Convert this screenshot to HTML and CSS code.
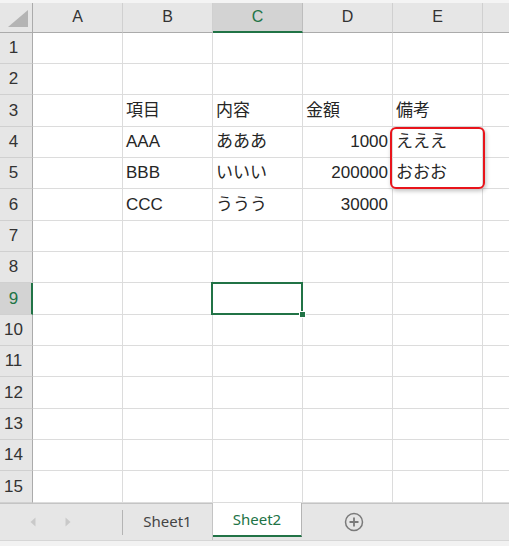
FILE: index.html
```html
<!DOCTYPE html>
<html lang="ja">
<head>
<meta charset="utf-8">
<title>Sheet2</title>
<link rel="stylesheet" href="styles.css">
</head>
<body>
<div class="app">
  <div class="topstrip"></div>
  <div class="sheet">
    <div class="corner"><span class="tri"></span></div>
    <div class="ch">A</div><div class="ch">B</div><div class="ch sel">C</div><div class="ch">D</div><div class="ch">E</div><div class="ch last"></div>

    <div class="rh r1">1</div><div class="c"></div><div class="c"></div><div class="c"></div><div class="c"></div><div class="c"></div><div class="c last"></div>
    <div class="rh r1">2</div><div class="c"></div><div class="c"></div><div class="c"></div><div class="c"></div><div class="c"></div><div class="c last"></div>
    <div class="rh r2">3</div><div class="c"></div><div class="c">項目</div><div class="c">内容</div><div class="c">金額</div><div class="c">備考</div><div class="c last"></div>
    <div class="rh r1">4</div><div class="c"></div><div class="c">AAA</div><div class="c">あああ</div><div class="c num">1000</div><div class="c">えええ</div><div class="c last"></div>
    <div class="rh r1">5</div><div class="c"></div><div class="c">BBB</div><div class="c">いいい</div><div class="c num">200000</div><div class="c">おおお</div><div class="c last"></div>
    <div class="rh r2">6</div><div class="c"></div><div class="c">CCC</div><div class="c">ううう</div><div class="c num">30000</div><div class="c"></div><div class="c last"></div>
    <div class="rh r1">7</div><div class="c"></div><div class="c"></div><div class="c"></div><div class="c"></div><div class="c"></div><div class="c last"></div>
    <div class="rh r1">8</div><div class="c"></div><div class="c"></div><div class="c"></div><div class="c"></div><div class="c"></div><div class="c last"></div>
    <div class="rh r2 sel">9</div><div class="c"></div><div class="c"></div><div class="c active"><span class="handle"></span></div><div class="c"></div><div class="c"></div><div class="c last"></div>
    <div class="rh r1">10</div><div class="c"></div><div class="c"></div><div class="c"></div><div class="c"></div><div class="c"></div><div class="c last"></div>
    <div class="rh r1">11</div><div class="c"></div><div class="c"></div><div class="c"></div><div class="c"></div><div class="c"></div><div class="c last"></div>
    <div class="rh r2">12</div><div class="c"></div><div class="c"></div><div class="c"></div><div class="c"></div><div class="c"></div><div class="c last"></div>
    <div class="rh r1">13</div><div class="c"></div><div class="c"></div><div class="c"></div><div class="c"></div><div class="c"></div><div class="c last"></div>
    <div class="rh r1">14</div><div class="c"></div><div class="c"></div><div class="c"></div><div class="c"></div><div class="c"></div><div class="c last"></div>
    <div class="rh r2">15</div><div class="c"></div><div class="c"></div><div class="c"></div><div class="c"></div><div class="c"></div><div class="c last"></div>

    <div class="highlight"></div>
  </div>
  <div class="tabbar">
    <div class="nav">
      <svg class="arrow" width="6" height="10" viewBox="0 0 6 10"><path d="M5.5 0.5 L0.5 5 L5.5 9.5 Z" fill="#c9c9c9"/></svg>
      <svg class="arrow" width="6" height="10" viewBox="0 0 6 10"><path d="M0.5 0.5 L5.5 5 L0.5 9.5 Z" fill="#c9c9c9"/></svg>
    </div>
    <div class="sep"></div>
    <div class="tab">Sheet1</div>
    <div class="tab active">Sheet2</div>
    <div class="rest">
      <svg class="plus" width="20" height="20" viewBox="0 0 20 20">
        <circle cx="10" cy="10" r="8.5" fill="none" stroke="#7a7a7a" stroke-width="1.5"/>
        <path d="M10 5.5 V14.5 M5.5 10 H14.5" stroke="#7a7a7a" stroke-width="1.8"/>
      </svg>
    </div>
  </div>
  <div class="status"></div>
</div>
</body>
</html>
```

FILE: styles.css
```css
html, body {
  margin: 0;
  padding: 0;
  background: #ffffff;
}

.app {
  width: 509px;
  height: 546px;
  overflow: hidden;
  font-family: "Liberation Sans", "Noto Sans CJK JP", sans-serif;
  color: #262626;
}

.topstrip {
  height: 3px;
  background: #f4f4f4;
}

.sheet {
  position: relative;
  display: grid;
  grid-template-columns: 33px repeat(5, 90px) 1fr;
  grid-template-rows: 30px 31px 31px 32px 31px 31px 32px 31px 31px 32px 31px 31px 32px 31px 31px 32px;
  height: 500px;
}

.corner {
  position: relative;
  background: #e6e6e6;
  border-right: 1px solid #ababab;
  border-bottom: 1px solid #ababab;
}

.tri {
  position: absolute;
  right: 4px;
  bottom: 5px;
  width: 0;
  height: 0;
  border-left: 20px solid transparent;
  border-bottom: 17px solid #b4b4b4;
}

.ch {
  background: #e6e6e6;
  border-right: 1px solid #d0d0d0;
  border-bottom: 1px solid #ababab;
  display: flex;
  align-items: center;
  justify-content: center;
  font-size: 16px;
  line-height: 20px;
  color: #333;
  padding-bottom: 1px;
}

.ch.sel {
  background: #d3d3d3;
  color: #217346;
  border-bottom: 2px solid #217346;
  border-right-color: #bdbdbd;
}

.ch.last {
  border-right: none;
}

.rh {
  background: #e6e6e6;
  border-right: 1px solid #ababab;
  border-bottom: 1px solid #d0d0d0;
  display: flex;
  align-items: center;
  justify-content: center;
  padding-right: 5px;
  font-size: 17px;
  line-height: 20px;
  color: #333;
}

.rh.sel {
  background: #d3d3d3;
  color: #217346;
  border-right: 2px solid #217346;
  padding-right: 4px;
}

.c {
  border-right: 1px solid #dcdcdc;
  border-bottom: 1px solid #dcdcdc;
  display: flex;
  align-items: center;
  padding: 0 3px;
  font-size: 17px;
  line-height: 20px;
  white-space: nowrap;
  overflow: visible;
  min-width: 0;
}

.c.num {
  justify-content: flex-end;
  padding-right: 4px;
}

.c.last {
  border-right: none;
}

.c.active {
  position: relative;
}

.c.active::after {
  content: "";
  position: absolute;
  left: -2px;
  top: -1px;
  right: -1px;
  bottom: -1px;
  border: 2px solid #217346;
  pointer-events: none;
}

.handle {
  position: absolute;
  right: -4px;
  bottom: -4px;
  width: 5px;
  height: 5px;
  background: #217346;
  border: 1px solid #ffffff;
  z-index: 2;
}

.highlight {
  position: absolute;
  left: 390px;
  top: 124px;
  width: 91px;
  height: 58px;
  border: 2px solid #e8141b;
  border-radius: 6px;
  box-shadow: 1px 2px 4px rgba(0, 0, 0, 0.25);
  pointer-events: none;
}

.tabbar {
  display: flex;
  height: 37px;
  box-sizing: border-box;
  background: #e6e6e6;
  border-top: 1px solid #c4c4c4;
  font-family: "Noto Sans", "Liberation Sans", sans-serif;
}

.nav {
  width: 122px;
  display: flex;
  align-items: center;
  padding-left: 30px;
  gap: 29px;
  box-sizing: border-box;
}

.sep {
  width: 1px;
  background: #b4b4b4;
  margin: 6px 0 5px;
}

.tab {
  width: 89px;
  display: flex;
  align-items: center;
  justify-content: center;
  font-size: 15px;
  color: #444;
  border-right: 1px solid #c4c4c4;
  padding-bottom: 2px;
}

.tab.active {
  background: #ffffff;
  color: #217346;
  margin-top: -1px;
  height: 34px;
  box-sizing: border-box;
  border-bottom: 2px solid #217346;
  border-right: 1px solid #b4b4b4;
  padding-bottom: 0;
}

.rest {
  flex: 1;
  display: flex;
  align-items: center;
  padding-left: 42px;
}

.status {
  height: 6px;
  background: #f2f2f2;
  border-top: 1px solid #d6d6d6;
}
```
